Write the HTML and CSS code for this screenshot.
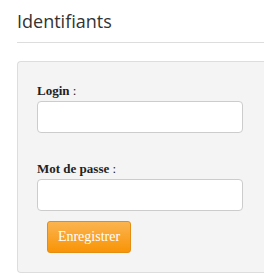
FILE: index.html
```html
<!DOCTYPE html>
<html lang="fr">
<head>
<meta charset="utf-8">
<link rel="stylesheet" href="styles.css">
</head>
<body>
<div class="page">
  <h2 class="title">Identifiants</h2>
  <div class="panel">
    <form class="form">
      <label class="label"><b>Login</b> :</label>
      <input class="input" type="text">
      <label class="label label-second"><b>Mot de passe</b> :</label>
      <input class="input" type="password">
      <button class="btn" type="button">Enregistrer</button>
    </form>
  </div>
</div>
</body>
</html>
```
FILE: styles.css
```css
html, body {
  margin: 0;
  padding: 0;
  overflow: hidden;
  background: #fff;
}
.page {
  padding-left: 17px;
}
.title {
  margin: 0;
  padding-top: 9px;
  height: 33px;
  border-bottom: 1px solid #dddddd;
  font-family: "Open Sans", sans-serif;
  font-weight: 400;
  font-size: 18px;
  line-height: 24px;
  color: #333;
}
.panel {
  margin-top: 18px;
  background: #f4f4f4;
  border: 1px solid #dddddd;
  border-right: 0;
  border-radius: 4px 0 0 4px;
  padding: 21px 0 19px 19px;
}
.form {
  display: flex;
  flex-direction: column;
  align-items: flex-start;
  font-family: "Liberation Serif", serif;
  font-size: 13px;
  color: #222;
}
.label {
  display: block;
  line-height: 16px;
  margin-bottom: 2px;
}
.label-second {
  margin-top: 28px;
}
.input {
  box-sizing: border-box;
  width: 206px;
  height: 32px;
  margin: 0;
  border: 1px solid #cccccc;
  border-radius: 4px;
  background: #fff;
}
.btn {
  box-sizing: border-box;
  margin: 10px 0 0 10px;
  width: 84px;
  height: 32px;
  border: 1px solid #e38d13;
  border-radius: 3px;
  background: linear-gradient(#fbb450, #f89406);
  color: #fff;
  font-family: "Liberation Serif", serif;
  font-size: 14px;
  padding: 0;
}
```
